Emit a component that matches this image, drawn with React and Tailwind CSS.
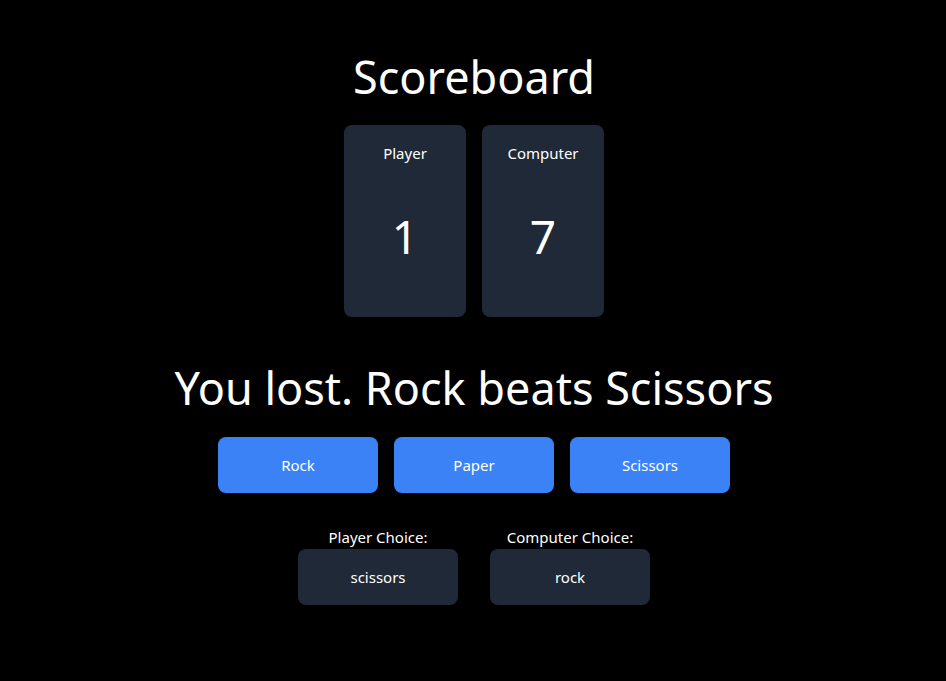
const ScoreCard = ({ label, score }) => (
    <div className="w-[122px] h-48 bg-[#1f2937] rounded-lg flex flex-col items-center pt-4">
        <p className="text-[15px] leading-6">{label}</p>
        <p className="text-[46px] leading-[48px] mt-[47px]">{score}</p>
    </div>
);

const ChoiceBox = ({ label, value }) => (
    <div className="flex flex-col items-center">
        <p className="text-[15px] leading-6">{label}</p>
        <div className="w-40 h-14 bg-[#1f2937] rounded-lg flex items-center justify-center text-[15px]">
            {value}
        </div>
    </div>
);

export default function App() {
    const buttons = ['Rock', 'Paper', 'Scissors'];

    return (
        <div className="min-h-[681px] bg-black text-white font-['Noto_Sans',sans-serif] flex flex-col items-center pt-[53px] pl-[2px]">
            <h1 className="text-[45px] leading-[48px]">Scoreboard</h1>
            <div className="flex gap-4 mt-6">
                <ScoreCard label="Player" score={1} />
                <ScoreCard label="Computer" score={7} />
            </div>
            <h2 className="text-[45px] leading-[48px] mt-[47px]">You lost. Rock beats Scissors</h2>
            <div className="flex gap-4 mt-[25px]">
                {buttons.map((b) => (
                    <button key={b} className="w-40 h-14 bg-[#3b82f6] rounded-lg text-[15px]">
                        {b}
                    </button>
                ))}
            </div>
            <div className="flex gap-8 mt-8">
                <ChoiceBox label="Player Choice:" value="scissors" />
                <ChoiceBox label="Computer Choice:" value="rock" />
            </div>
        </div>
    );
}
